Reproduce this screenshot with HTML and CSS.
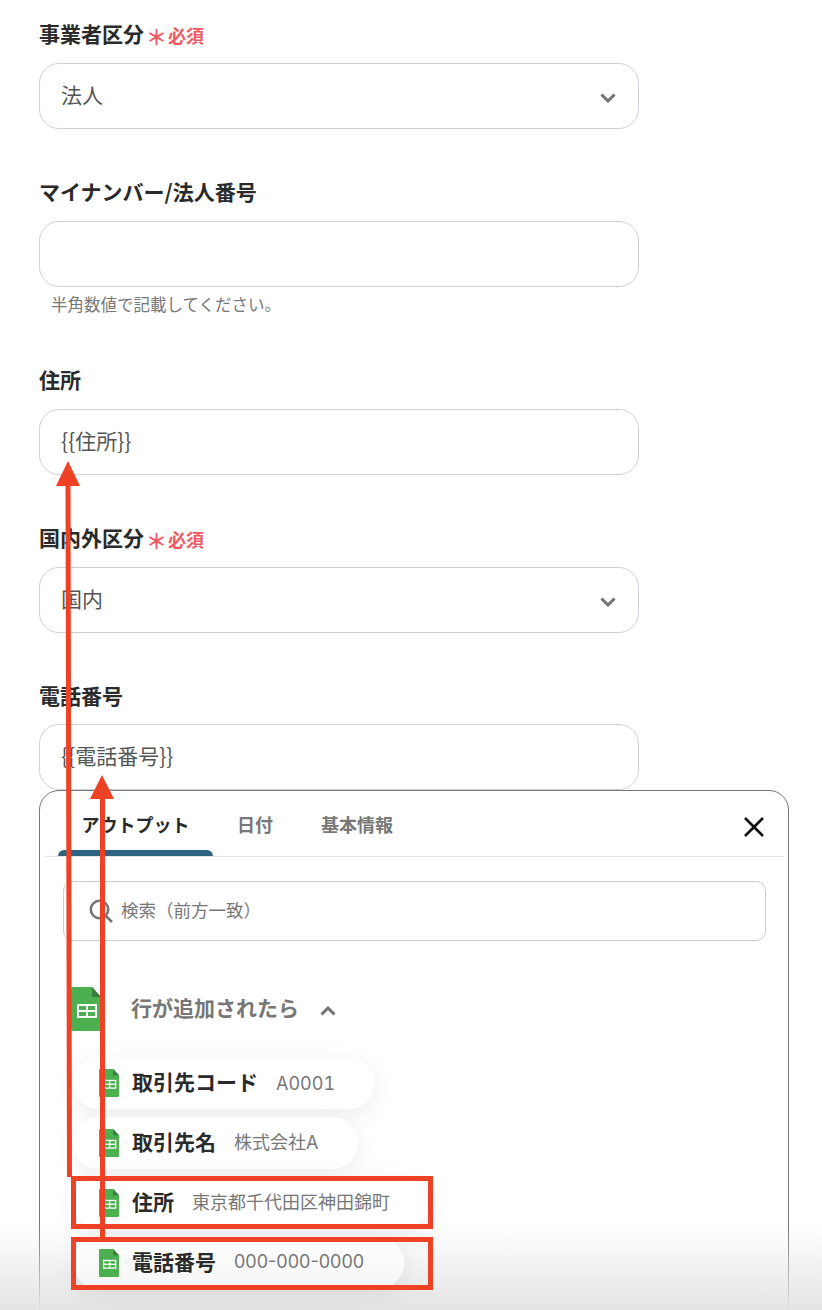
FILE: index.html
```html
<!DOCTYPE html>
<html lang="ja">
<head>
<meta charset="utf-8">
<title>フォーム</title>
<link rel="stylesheet" href="styles.css">
</head>
<body>
<svg class="defs" width="0" height="0" aria-hidden="true">
  <symbol id="sheet" viewBox="0 0 30 44" preserveAspectRatio="none">
    <path d="M2 0H21L30 10V42A2 2 0 0 1 28 44H2A2 2 0 0 1 0 42V2A2 2 0 0 1 2 0Z" fill="#4caf50"/>
    <path d="M21 0L30 10H21Z" fill="#35803a"/>
    <rect x="6" y="17" width="20" height="14" fill="#fff"/>
    <rect x="8" y="19" width="7" height="4" fill="#4caf50"/>
    <rect x="17" y="19" width="7" height="4" fill="#4caf50"/>
    <rect x="8" y="25" width="7" height="4" fill="#4caf50"/>
    <rect x="17" y="25" width="7" height="4" fill="#4caf50"/>
  </symbol>
  <symbol id="chev" viewBox="0 0 16 10">
    <path d="M1.5 1.5L8 8L14.5 1.5" fill="none" stroke="#757575" stroke-width="3"/>
  </symbol>
</svg>
<div class="page">
  <main class="form">
    <section class="field">
      <div class="label">事業者区分<span class="req"><span class="star">＊</span>必須</span></div>
      <div class="control">法人<svg class="chev"><use href="#chev"/></svg></div>
    </section>
    <section class="field">
      <div class="label">マイナンバー/法人番号</div>
      <div class="control"></div>
      <p class="hint">半角数値で記載してください。</p>
    </section>
    <section class="field">
      <div class="label">住所</div>
      <div class="control">{{住所}}</div>
    </section>
    <section class="field">
      <div class="label">国内外区分<span class="req"><span class="star">＊</span>必須</span></div>
      <div class="control">国内<svg class="chev"><use href="#chev"/></svg></div>
    </section>
    <section class="field field-last">
      <div class="label">電話番号</div>
      <div class="control">{{電話番号}}</div>
    </section>
    <section class="panel">
      <header class="tabbar">
        <nav class="tabs">
          <div class="tab tab-active"><span class="tab-text">アウトプット</span><span class="tab-line"></span></div>
          <div class="tab"><span class="tab-text">日付</span></div>
          <div class="tab"><span class="tab-text">基本情報</span></div>
        </nav>
        <svg class="close" viewBox="0 0 20 20"><path d="M1 1L19 19M19 1L1 19" stroke="#111" stroke-width="2.6" fill="none"/></svg>
      </header>
      <div class="panel-body">
        <div class="search">
          <svg class="search-icon" viewBox="0 0 24 24"><circle cx="10.5" cy="10.5" r="8.7" fill="none" stroke="#757575" stroke-width="2.6"/><path d="M16.8 16.8L23 23" stroke="#757575" stroke-width="2.6" fill="none"/></svg>
          <span class="search-text">検索（前方一致）</span>
        </div>
        <div class="group">
          <svg class="group-icon"><use href="#sheet"/></svg>
          <span class="group-title">行が追加されたら</span>
          <svg class="group-chev"><use href="#chev"/></svg>
        </div>
        <ul class="pills">
          <li class="pill"><svg class="pill-icon"><use href="#sheet"/></svg><b class="pill-name">取引先コード</b><span class="pill-value pill-code">A0001</span></li>
          <li class="pill"><svg class="pill-icon"><use href="#sheet"/></svg><b class="pill-name">取引先名</b><span class="pill-value">株式会社A</span></li>
          <li class="pill"><svg class="pill-icon"><use href="#sheet"/></svg><b class="pill-name">住所</b><span class="pill-value">東京都千代田区神田錦町</span></li>
          <li class="pill pill-shaded"><svg class="pill-icon"><use href="#sheet"/></svg><b class="pill-name">電話番号</b><span class="pill-value">000-000-0000</span></li>
        </ul>
      </div>
    </section>
  </main>
  <div class="fade"></div>
  <svg class="marks" viewBox="0 0 822 1310">
    <path d="M65.500 480H70.500L72 1177H67Z" fill="#ee4226"/>
    <path d="M68 461L80 486H56Z" fill="#ee4226"/>
    <path d="M100 795H105L105 1242H100Z" fill="#ee4226"/>
    <path d="M102 775L114 799H90Z" fill="#ee4226"/>
    <rect x="73.500" y="1178.500" width="357" height="48" fill="none" stroke="#ee4226" stroke-width="5"/>
    <rect x="73.500" y="1239.500" width="357" height="48" fill="none" stroke="#ee4226" stroke-width="5"/>
  </svg>
</div>
</body>
</html>
```
FILE: styles.css
```css
* { box-sizing: border-box; }
html, body { margin: 0; padding: 0; background: #fff; }
body { font-family: "Noto Sans CJK JP", "Noto Sans", sans-serif; color: #2a2a2a; }
.defs { position: absolute; }
.page { position: relative; width: 822px; height: 1310px; overflow: hidden; }
.form { padding: 20px 0 0 39px; }

.field { width: 600px; margin-bottom: 49px; }
.field-last { margin-bottom: 0; }
.field-last .label { margin-bottom: 12px; }
.label { height: 30px; margin-bottom: 13px; padding-bottom: 4px; display: flex; align-items: center; font-size: 21px; font-weight: 700; line-height: 26px; color: #2a2a2a; }
.req { display: flex; align-items: center; margin: 4px 0 0 5px; font-size: 18px; font-weight: 700; color: #ee5a63; }
.star { font-size: 21px; line-height: 21px; width: 21px; margin: 2px 1px 0 -3px; text-align: center; }
.control { height: 66px; display: flex; align-items: center; justify-content: space-between; padding: 0 22px 4px 21px; border: 1px solid #ced2d8; border-radius: 20px; background: #fff; font-size: 21px; color: #555; }
.chev { width: 16px; height: 10px; margin-top: 8px; }
.hint { margin: 5px 0 0 12px; padding-bottom: 1px; font-size: 16.500px; line-height: 24px; color: #777; }

.panel { width: 750px; height: 640px; border: 1px solid #777; border-radius: 20px; background: #fff; }
.tabbar { height: 66px; margin: 0 4px 0 5px; padding: 0 20px 0 13px; border-bottom: 1px solid #e4e4e4; display: flex; align-items: stretch; justify-content: space-between; }
.tabs { display: flex; }
.tab { position: relative; padding: 0 24px; display: flex; align-items: center; height: 65px; font-size: 18px; font-weight: 700; color: #777; }
.tab-active { padding: 0 23.500px; color: #2a2a2a; }
.tab-line { position: absolute; left: 0; right: 0; bottom: 0; height: 6px; background: #2e6480; border-radius: 6px 6px 0 0; }
.close { width: 20px; height: 20px; align-self: center; margin-top: 6px; }

.panel-body { padding: 24px 22px 0 23px; }
.search { height: 60px; display: flex; align-items: center; gap: 8px; padding-left: 25px; border: 1px solid #ccc; border-radius: 10px; font-size: 17.500px; color: #777; }
.search-icon { width: 24px; height: 24px; }
.search-text { margin-bottom: 3px; }
.group { display: flex; align-items: center; margin: 46px 0 26px 8px; height: 44px; }
.group-icon { width: 30px; height: 44px; }
.group-title { margin: 0 0 4px 30px; font-size: 21px; font-weight: 700; color: #777; }
.group-chev { width: 16px; height: 10px; margin: 3px 0 0 21px; transform: rotate(180deg); }

.pills { position: relative; z-index: 1; list-style: none; margin: 0 0 0 10px; padding: 0; display: flex; flex-direction: column; align-items: flex-start; gap: 8px; }
.pill { height: 52px; display: flex; align-items: center; padding: 0 40px 4px 26px; border-radius: 26px; background: #fff; box-shadow: 0 6px 24px rgba(0,0,0,.07); }
.pill-shaded { background: linear-gradient(to bottom, #fff, #f6f6f6); }
.pill-icon { width: 20px; height: 28px; flex: none; margin-top: 4px; }
.pill-name { margin-left: 13px; font-size: 21px; font-weight: 700; color: #2a2a2a; }
.pill-value { margin-left: 18px; font-family: Inter, "Noto Sans CJK JP", sans-serif; font-size: 18px; color: #777; }
.pill-code { margin-top: 4px; font-variant-numeric: tabular-nums; }

.fade { position: absolute; left: 0; right: 0; bottom: 0; height: 85px; background: linear-gradient(to bottom, rgba(228,228,228,0), #e4e4e4); pointer-events: none; }
.marks { position: absolute; z-index: 2; left: 0; top: 0; width: 822px; height: 1310px; pointer-events: none; }
```
